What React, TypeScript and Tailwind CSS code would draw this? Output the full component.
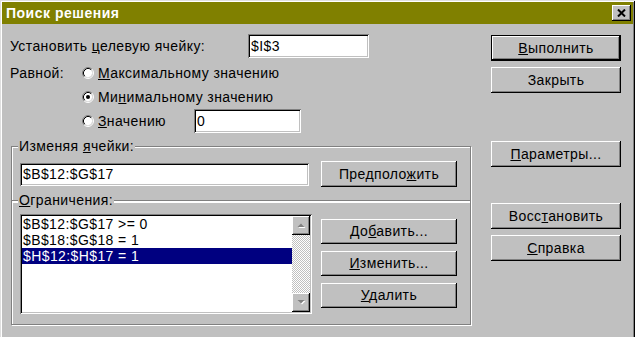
import React from 'react';

const raised = 'bg-[#c0c0c0] shadow-[inset_-1px_-1px_#000,inset_1px_1px_#fff,inset_-2px_-2px_#808080]';
const sunken = 'bg-white shadow-[inset_1px_1px_#808080,inset_-1px_-1px_#fff,inset_2px_2px_#000,inset_-2px_-2px_#c0c0c0]';
const etched = 'border border-[#808080] shadow-[inset_1px_1px_#fff,1px_1px_#fff]';

function Button({ children, className = '', isDefault = false }: { children: React.ReactNode; className?: string; isDefault?: boolean }) {
  return (
    <div className={`flex ${isDefault ? 'border border-black' : ''} ${className}`}>
      <div className={`flex h-full w-full items-center justify-center ${raised}`}>
        <span>{children}</span>
      </div>
    </div>
  );
}

function Radio({ checked = false }: { checked?: boolean }) {
  return (
    <svg width="12" height="12" viewBox="0 0 12 12" className="shrink-0">
      <circle cx="6" cy="6" r="4.2" fill="#fff" />
      <path d="M2.11 9.89 A5.5 5.5 0 0 1 9.89 2.11" stroke="#808080" fill="none" />
      <path d="M9.89 2.11 A5.5 5.5 0 0 1 2.11 9.89" stroke="#fff" fill="none" />
      <path d="M2.82 9.18 A4.5 4.5 0 0 1 9.18 2.82" stroke="#000" fill="none" />
      <path d="M9.18 2.82 A4.5 4.5 0 0 1 2.82 9.18" stroke="#dfdfdf" fill="none" />
      {checked && <circle cx="6" cy="6" r="2" fill="#000" />}
    </svg>
  );
}

function Arrow({ down = false }: { down?: boolean }) {
  return (
    <svg width="9" height="6" viewBox="0 0 9 6">
      {down ? (
        <>
          <path d="M1.5 1 H8.5 L5 4.5 Z" fill="#fff" />
          <path d="M0.5 0 H7.5 L4 3.5 Z" fill="#808080" />
        </>
      ) : (
        <>
          <path d="M1.5 5 H8.5 L5 1.5 Z" fill="#fff" />
          <path d="M0.5 4 H7.5 L4 0.5 Z" fill="#808080" />
        </>
      )}
    </svg>
  );
}

export default function App() {
  return (
    <div className="h-[337px] w-[635px] overflow-hidden bg-[#c0c0c0] px-[2px] pt-[2px] font-['Liberation_Sans',Arial,sans-serif] text-[14px] tracking-[0.4px] text-black shadow-[inset_1px_1px_#dfdfdf,inset_-1px_0_#000,inset_2px_2px_#fff,inset_-2px_0_#808080]">
      {/* title bar */}
      <div className="flex h-[22px] items-center justify-between bg-[#808000] pl-[4px] pr-[2px]">
        <span className="text-[14px] font-bold tracking-[0.5px] text-white">Поиск решения</span>
        <div className={`flex h-[16px] w-[19px] items-center justify-center ${raised}`}>
          <svg width="9" height="8" viewBox="0 0 9 8">
            <path d="M1 0.5 L8 7.5 M8 0.5 L1 7.5" stroke="#000" strokeWidth="2" />
          </svg>
        </div>
      </div>

      <div className="flex">
        {/* left side */}
        <div className="w-[489px]">
          <div className="mt-[10px] flex h-[24px] items-center pl-[8px]">
            <span className="w-[238px]">
              Установить <u>ц</u>елевую ячейку:
            </span>
            <div className={`flex h-[24px] w-[121px] items-center pl-[3px] ${sunken}`}>$I$3</div>
          </div>

          <div className="mt-[3px] flex pl-[8px]">
            <div className="flex h-[24px] w-[72px] items-center">Равной:</div>
            <div className="flex flex-col">
              <div className="flex h-[24px] items-center gap-[4px]">
                <Radio />
                <span>
                  <u>М</u>аксимальному значению
                </span>
              </div>
              <div className="flex h-[24px] items-center gap-[4px]">
                <Radio checked />
                <span>
                  Ми<u>н</u>имальному значению
                </span>
              </div>
              <div className="flex h-[24px] items-center gap-[4px]">
                <Radio />
                <span className="w-[92px]">
                  <u>З</u>начению
                </span>
                <div className={`flex h-[24px] w-[107px] items-center pl-[3px] ${sunken}`}>0</div>
              </div>
            </div>
          </div>

          {/* group: changing cells */}
          <div className={`relative ml-[9px] mt-[13px] h-[56px] w-[460px] ${etched}`}>
            <span className="absolute left-[6px] top-[-9px] bg-[#c0c0c0] px-[1px] leading-[16px]">
              Изменяя <u>я</u>чейки:
            </span>
            <div className="mt-[14px] flex h-[26px] items-center pl-[8px]">
              <div className={`flex h-[23px] w-[289px] items-center pl-[3px] ${sunken}`}>$B$12:$G$17</div>
              <Button className="ml-[12px] h-[26px] w-[136px]">
                Предполо<u>ж</u>ить
              </Button>
            </div>
          </div>

          {/* group: constraints */}
          <div className={`relative ml-[9px] mt-[-2px] h-[125px] w-[460px] ${etched}`}>
            <span className="absolute left-[6px] top-[-9px] bg-[#c0c0c0] px-[1px] leading-[16px]">
              <u>О</u>граничения:
            </span>
            <div className="mt-[13px] flex pl-[8px]">
              <div className={`flex h-[100px] w-[292px] p-[2px] ${sunken}`}>
                <div className="w-[270px]">
                  <div className="h-[16px] pl-[1px] leading-[16px]">$B$12:$G$17 &gt;= 0</div>
                  <div className="h-[16px] pl-[1px] leading-[16px]">$B$18:$G$18 = 1</div>
                  <div className="h-[16px] bg-[#000080] pl-[1px] leading-[16px] text-white">$H$12:$H$17 = 1</div>
                </div>
                <div className="flex w-[18px] flex-col">
                  <div className={`flex h-[19px] items-center justify-center ${raised}`}>
                    <Arrow />
                  </div>
                  <div className="flex-1 bg-[repeating-conic-gradient(#c0c0c0_0%_25%,#fff_0%_50%)] bg-[length:2px_2px]" />
                  <div className={`flex h-[19px] items-center justify-center ${raised}`}>
                    <Arrow down />
                  </div>
                </div>
              </div>
              <div className="ml-[9px] mt-[5px] flex flex-col gap-[7px]">
                <Button className="h-[25px] w-[136px]">
                  До<u>б</u>авить...
                </Button>
                <Button className="h-[25px] w-[136px]">
                  <u>И</u>зменить...
                </Button>
                <Button className="h-[25px] w-[136px]">
                  <u>У</u>далить
                </Button>
              </div>
            </div>
          </div>
        </div>

        {/* right side buttons */}
        <div className="flex w-[130px] flex-col pt-[11px]">
          <Button isDefault className="h-[26px] w-[130px]">
            <u>В</u>ыполнить
          </Button>
          <Button className="mt-[6px] h-[26px] w-[130px]">Закрыть</Button>
          <Button className="mt-[48px] h-[26px] w-[130px]">
            <u>П</u>араметры...
          </Button>
          <Button className="mt-[36px] h-[26px] w-[130px]">
            Восс<u>т</u>ановить
          </Button>
          <Button className="mt-[6px] h-[26px] w-[130px]">
            <u>С</u>правка
          </Button>
        </div>
      </div>
    </div>
  );
}
